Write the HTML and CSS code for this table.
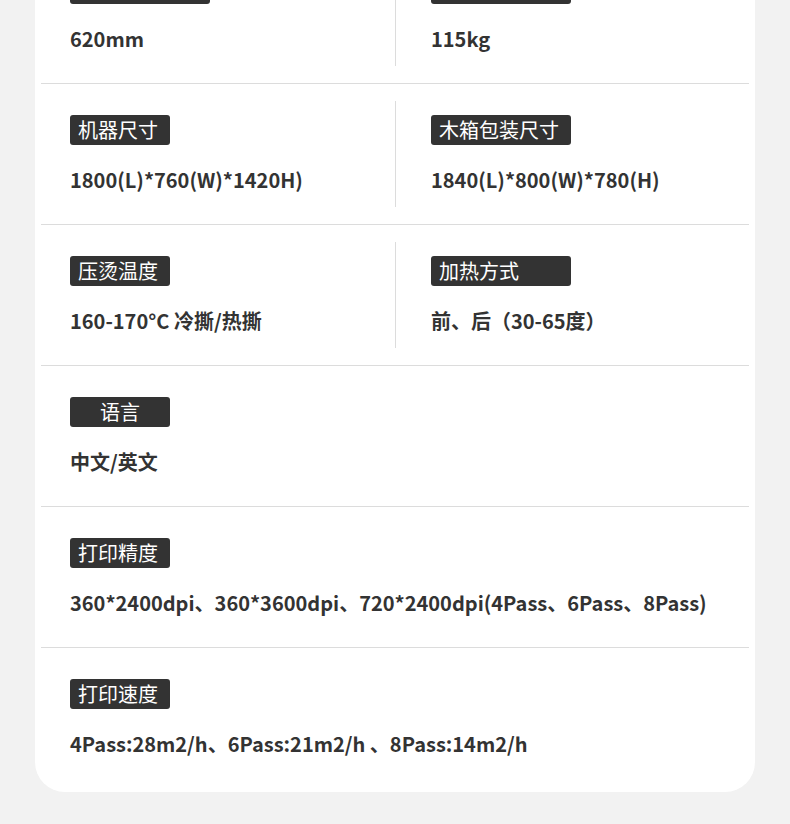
FILE: index.html
```html
<!DOCTYPE html>
<html lang="zh-CN">
  <head>
    <meta charset="UTF-8" />
    <meta name="viewport" content="width=device-width, initial-scale=1.0" />
    <title>产品参数</title>
    <link rel="stylesheet" href="styles.css">
  </head>

  <body>
    <div class="spec-card">
      <!-- first row is scrolled mostly out of view, only the values show -->
      <div class="spec-row">
        <div class="spec-col">
          <div class="spec-label wide"></div>
          <div class="spec-value">620mm</div>
        </div>
        <div class="spec-col right">
          <div class="spec-label wide"></div>
          <div class="spec-value">115kg</div>
        </div>
      </div>

      <div class="spec-row">
        <div class="spec-col">
          <div class="spec-label">机器尺寸</div>
          <div class="spec-value">1800(L)*760(W)*1420H)</div>
        </div>
        <div class="spec-col right">
          <div class="spec-label wide">木箱包装尺寸</div>
          <div class="spec-value">1840(L)*800(W)*780(H)</div>
        </div>
      </div>

      <div class="spec-row">
        <div class="spec-col">
          <div class="spec-label">压烫温度</div>
          <div class="spec-value">160-170°C 冷撕/热撕</div>
        </div>
        <div class="spec-col right">
          <div class="spec-label wide">加热方式</div>
          <div class="spec-value">前、后（30-65度）</div>
        </div>
      </div>

      <div class="spec-row">
        <div class="spec-col">
          <div class="spec-label center">语言</div>
          <div class="spec-value">中文/英文</div>
        </div>
      </div>

      <div class="spec-row">
        <div class="spec-col">
          <div class="spec-label">打印精度</div>
          <div class="spec-value">360*2400dpi、360*3600dpi、720*2400dpi(4Pass、6Pass、8Pass)</div>
        </div>
      </div>

      <div class="spec-row last">
        <div class="spec-col">
          <div class="spec-label">打印速度</div>
          <div class="spec-value">4Pass:28m2/h、6Pass:21m2/h 、8Pass:14m2/h</div>
        </div>
      </div>
    </div>
  </body>
</html>
```

FILE: styles.css
```css
/* Page */
body {
  margin: 0;
  background-color: #f2f2f2;
  font-family: "Noto Sans CJK SC", "Noto Sans", sans-serif;
  color: #333;
}

/* White card holding the spec table */
.spec-card {
  margin: -57px 35px 0;
  padding: 0 6px 4px;
  background-color: #fff;
  border-radius: 0 0 30px 30px;
}

.spec-row {
  display: flex;
  height: 140px;
  border-bottom: 1px solid #dcdcdc;
}

.spec-row.last {
  border-bottom: none;
}

.spec-col {
  box-sizing: border-box;
  width: 50%;
  margin: 17px 0;
  padding: 14px 0 0 29px;
}

.spec-col.right {
  border-left: 1px solid #dcdcdc;
  padding-left: 35px;
}

/* Dark tag above each value */
.spec-label {
  box-sizing: border-box;
  width: 100px;
  height: 30px;
  padding: 0 8px;
  background-color: #333;
  border-radius: 3px;
  color: #fff;
  font-size: 20px;
  line-height: 30px;
  white-space: nowrap;
}

.spec-label.wide {
  width: 140px;
}

.spec-label.center {
  text-align: center;
}

.spec-value {
  margin-top: 20px;
  font-size: 20px;
  font-weight: bold;
  line-height: 30px;
  white-space: nowrap;
}
```
